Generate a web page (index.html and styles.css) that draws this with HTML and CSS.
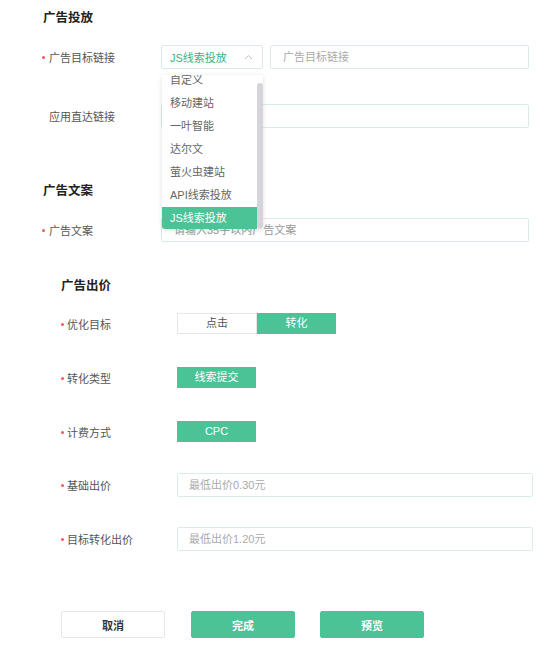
FILE: index.html
```html
<!DOCTYPE html>
<html lang="zh">
<head>
<meta charset="utf-8">
<link rel="stylesheet" href="styles.css">
</head>
<body>
<div class="page">
  <section class="sec sec-a">
    <h2 class="title">广告投放</h2>
    <div class="row row-1">
      <div class="label req">广告目标链接</div>
      <div class="select-wrap">
        <div class="select">
          <span class="select-val">JS线索投放</span>
          <svg class="caret" width="9" height="6" viewBox="0 0 9 6"><path d="M1 5 L4.5 1.5 L8 5" fill="none" stroke="#c2c2c2" stroke-width="1"/></svg>
        </div>
        <div class="dropdown">
          <ul class="options">
            <li>自定义</li>
            <li>移动建站</li>
            <li>一叶智能</li>
            <li>达尔文</li>
            <li>萤火虫建站</li>
            <li>API线索投放</li>
            <li class="active">JS线索投放</li>
          </ul>
          <div class="track"><div class="thumb"></div></div>
        </div>
      </div>
      <div class="input w-url">广告目标链接</div>
    </div>
    <div class="row row-2">
      <div class="label">应用直达链接</div>
      <div class="input w-full"></div>
    </div>
    <h2 class="title title-2">广告文案</h2>
    <div class="row row-3">
      <div class="label req">广告文案</div>
      <div class="input w-full">请输入35字以内广告文案</div>
    </div>
  </section>
  <section class="sec sec-b">
    <h2 class="title">广告出价</h2>
    <div class="row row-seg">
      <div class="label req">优化目标</div>
      <div class="seg">
        <span class="seg-item">点击</span>
        <span class="seg-item on">转化</span>
      </div>
    </div>
    <div class="row row-btn">
      <div class="label req">转化类型</div>
      <span class="chip">线索提交</span>
    </div>
    <div class="row row-btn">
      <div class="label req">计费方式</div>
      <span class="chip">CPC</span>
    </div>
    <div class="row row-in">
      <div class="label req">基础出价</div>
      <div class="input w-price">最低出价0.30元</div>
    </div>
    <div class="row row-in2">
      <div class="label req">目标转化出价</div>
      <div class="input w-price">最低出价1.20元</div>
    </div>
    <div class="actions">
      <button class="btn btn-ghost">取消</button>
      <button class="btn btn-primary">完成</button>
      <button class="btn btn-primary">预览</button>
    </div>
  </section>
</div>
</body>
</html>
```

FILE: styles.css
```css
* { box-sizing: border-box; }
html, body { margin: 0; padding: 0; background: #fff; }
body {
  font-family: "Liberation Sans", "Noto Sans CJK SC", sans-serif;
  font-size: 11px;
  color: #555;
}
.page { padding-top: 8px; }
.title {
  margin: 0;
  font-size: 12.5px;
  font-weight: 700;
  color: #222;
  line-height: 20px;
  height: 20px;
}
.sec-a { padding-left: 42px; }
.sec-a .title { margin-left: 1px; }
.sec-b { padding-left: 61px; margin-top: 34px; }

.row { display: flex; align-items: center; }
.label {
  position: relative;
  padding-left: 7px;
  color: #555;
  font-size: 11px;
  flex: none;
}
.sec-a .label { width: 119px; }
.sec-b .label { width: 116px; padding-left: 6px; }
.label.req::before {
  content: "";
  position: absolute;
  left: 0;
  top: 50%;
  width: 3px;
  height: 3px;
  margin-top: -1px;
  border-radius: 50%;
  background: #f0595a;
}

.row-1 { margin-top: 17px; height: 24px; }
.row-2 { margin-top: 35px; height: 24px; }
.title-2 { margin-top: 53px; }
.row-3 { margin-top: 17px; height: 24px; }

.input {
  height: 24px;
  border: 1px solid #d8ede6;
  border-radius: 2px;
  padding-left: 12px;
  line-height: 22px;
  color: #aaa;
  font-size: 11px;
}
.w-url { width: 259px; margin-left: 7px; }
.w-full { width: 368px; }
.row-3 .w-full { color: #999; }
.w-price { width: 356px; padding-left: 11px; }

.select-wrap { position: relative; width: 102px; height: 24px; }
.select {
  height: 24px;
  border: 1px solid #d8ede6;
  border-radius: 2px;
  display: flex;
  align-items: center;
  justify-content: space-between;
  padding: 0 9px 0 8px;
  color: #36b386;
  font-size: 11px;
}
.caret { display: block; }
.dropdown {
  position: absolute;
  left: 1px;
  top: 30px;
  width: 101px;
  height: 154px;
  background: #fff;
  border-radius: 3px;
  box-shadow: 0 1px 5px rgba(0,0,0,0.12);
  overflow: hidden;
  z-index: 5;
}
.options {
  list-style: none;
  margin: -6px 0 0 0;
  padding: 0;
  width: 95px;
}
.options li {
  height: 23px;
  line-height: 23px;
  padding-left: 8px;
  color: #666;
  font-size: 11px;
  white-space: nowrap;
}
.options li.active { background: #4cc297; color: #fff; }
.track {
  position: absolute;
  right: 0;
  top: 0;
  width: 6px;
  height: 100%;
}
.thumb {
  position: absolute;
  left: 0;
  top: 8px;
  width: 6px;
  bottom: 0;
  background: #d4d4da;
  border-radius: 3px;
}

.row-seg { margin-top: 17px; height: 21px; }
.row-btn { margin-top: 33px; height: 21px; }
.row-in { margin-top: 31px; height: 24px; }
.row-in2 { margin-top: 30px; height: 24px; }

.seg { display: flex; height: 21px; }
.seg-item {
  width: 80px;
  height: 21px;
  line-height: 19px;
  text-align: center;
  border: 1px solid #e6e6e6;
  color: #555;
  font-size: 11px;
}
.seg-item.on {
  width: 79px;
  background: #4cc297;
  border-color: #4cc297;
  color: #fff;
}
.chip {
  width: 79px;
  height: 21px;
  line-height: 21px;
  text-align: center;
  background: #4cc297;
  color: #fff;
  font-size: 11px;
}

.actions { display: flex; margin-top: 60px; }
.btn {
  width: 104px;
  height: 27px;
  font-family: inherit;
  font-size: 11px;
  font-weight: 700;
  border-radius: 2px;
  padding: 0;
  cursor: pointer;
}
.btn-ghost { background: #fff; border: 1px solid #e6e6e6; color: #333; }
.btn-primary { background: #4cc297; border: 1px solid #4cc297; color: #fff; }
.btn + .btn { margin-left: 26px; }
.btn:last-child { margin-left: 25px; }
```
